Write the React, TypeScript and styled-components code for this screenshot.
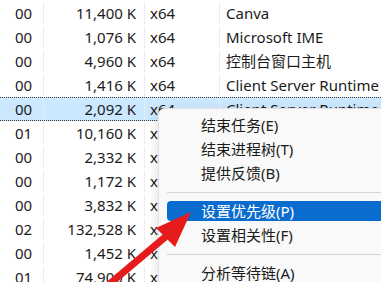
import React from "react";
import styled, { createGlobalStyle } from "styled-components";

const GlobalStyle = createGlobalStyle`
  html, body {
    margin: 0;
    padding: 0;
    background: #ffffff;
    overflow: hidden;
  }
  body {
    font-family: "Noto Sans", "Noto Sans CJK SC", sans-serif;
    color: #1b1b1b;
  }
`;

const Screen = styled.div`
  position: relative;
  width: 381px;
  height: 282px;
  overflow: hidden;
  background: #ffffff;
`;

const Table = styled.div`
  display: flex;
  flex-direction: column;
  padding-top: 1px;
`;

const Row = styled.div<{ $selected?: boolean }>`
  display: grid;
  grid-template-columns: 44px 101px 75px 1fr;
  height: 24px;
  box-sizing: border-box;
  font-size: 15px;
  line-height: 22px;
  white-space: nowrap;
  background: ${(p) => (p.$selected ? "#cce8ff" : "transparent")};
  border-top: 1px dotted ${(p) => (p.$selected ? "#3a3a3a" : "transparent")};
  border-bottom: 1px dotted ${(p) => (p.$selected ? "#3a3a3a" : "transparent")};
`;

const Cell = styled.div<{ $align?: "left" | "right" }>`
  box-sizing: border-box;
  overflow: hidden;
  text-align: ${(p) => p.$align ?? "left"};
  border-right: 1px solid #ececec;
`;

const Pri = styled(Cell)`
  padding-left: 15px;
`;

const Mem = styled(Cell)`
  padding-right: 8px;
`;

const Arch = styled(Cell)`
  padding-left: 5px;
`;

const Name = styled(Cell)`
  padding-left: 6px;
  border-right: none;
`;

const Menu = styled.div`
  position: absolute;
  left: 158px;
  top: 108px;
  width: 250px;
  padding: 4px 0;
  background: #f9f9f9;
  border: 1px solid #e2e2e2;
  border-radius: 7px;
  box-shadow: 0 4px 12px rgba(0, 0, 0, 0.14);
  font-size: 15px;
`;

const Item = styled.div<{ $active?: boolean }>`
  height: 24px;
  padding: 2px 0 2px 8px;
  box-sizing: border-box;
  display: flex;

  span {
    flex: 1;
    display: flex;
    align-items: center;
    padding-left: 34px;
    padding-bottom: 2px;
    border-radius: 4px 0 0 4px;
    background: ${(p) => (p.$active ? "#0a6ccf" : "transparent")};
    color: ${(p) => (p.$active ? "#ffffff" : "#1b1b1b")};
  }
`;

const Separator = styled.div`
  height: 14px;
  display: flex;
  align-items: center;
  padding-left: 8px;

  &::after {
    content: "";
    flex: 1;
    height: 1px;
    background: #d4d4d4;
  }
`;

const ArrowLayer = styled.svg`
  position: absolute;
  left: 0;
  top: 0;
  pointer-events: none;
`;

const rows = [
  ["00", "11,400 K", "x64", "Canva"],
  ["00", "1,076 K", "x64", "Microsoft IME"],
  ["00", "4,960 K", "x64", "控制台窗口主机"],
  ["00", "1,416 K", "x64", "Client Server Runtime Process"],
  ["00", "2,092 K", "x64", "Client Server Runtime Process"],
  ["01", "10,160 K", "x64", "Windows 资源管理器"],
  ["00", "2,332 K", "x64", "服务主机"],
  ["00", "1,172 K", "x64", "服务主机"],
  ["00", "3,832 K", "x64", "Windows 登录应用程序"],
  ["02", "132,528 K", "x64", "桌面窗口管理器"],
  ["00", "1,452 K", "x64", "服务主机"],
  ["01", "74,900 K", "x64", "Microsoft Edge"],
];

const menuItems: (string | null)[] = [
  "结束任务(E)",
  "结束进程树(T)",
  "提供反馈(B)",
  null,
  "设置优先级(P)",
  "设置相关性(F)",
  null,
  "分析等待链(A)",
];

const App = () => {
  return (
    <Screen>
      <GlobalStyle />
      <Table>
        {rows.map((r, i) => (
          <Row key={i} $selected={i === 4}>
            <Pri>{r[0]}</Pri>
            <Mem $align="right">{r[1]}</Mem>
            <Arch>{r[2]}</Arch>
            <Name>{r[3]}</Name>
          </Row>
        ))}
      </Table>

      <Menu>
        {menuItems.map((m, i) =>
          m === null ? (
            <Separator key={i} />
          ) : (
            <Item key={i} $active={m.startsWith("设置优先级")}>
              <span>{m}</span>
            </Item>
          )
        )}
      </Menu>

      {/* 빨간 화살표 */}
      <ArrowLayer width="381" height="282" viewBox="0 0 381 282">
        <line x1="100" y1="292" x2="170" y2="233" stroke="#e61b1b" strokeWidth="7" />
        <polygon points="191,212 156,228 175,247" fill="#e61b1b" />
      </ArrowLayer>
    </Screen>
  );
};

export default App;
